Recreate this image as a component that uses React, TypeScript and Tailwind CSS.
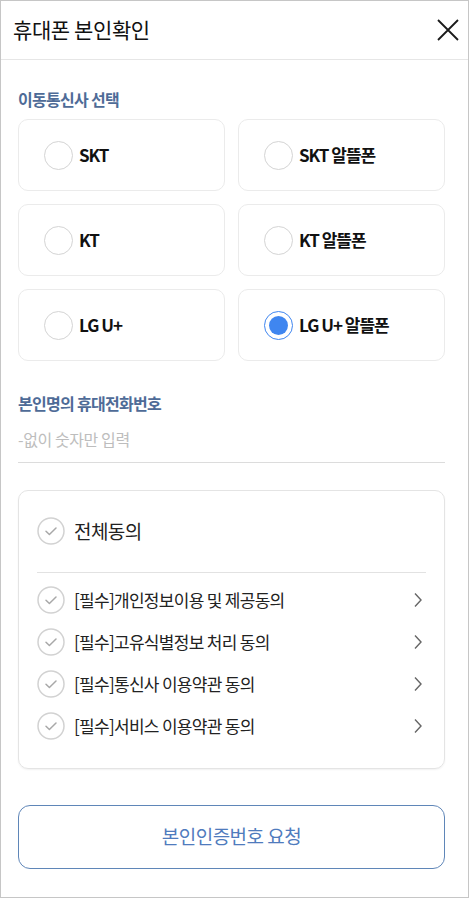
import { useState } from 'react';

const carriers = ['SKT', 'SKT 알뜰폰', 'KT', 'KT 알뜰폰', 'LG U+', 'LG U+ 알뜰폰'];

const terms = [
  '[필수]개인정보이용 및 제공동의',
  '[필수]고유식별정보 처리 동의',
  '[필수]통신사 이용약관 동의',
  '[필수]서비스 이용약관 동의',
];

function CheckCircle() {
  return (
    <svg className="w-[28px] h-[28px] shrink-0" viewBox="0 0 28 28" fill="none">
      <circle cx="14" cy="14" r="13" stroke="#d2d2d2" strokeWidth="1.5" />
      <path d="M9 14.2l3.4 3.3L19 11" stroke="#a8a8a8" strokeWidth="1.5" strokeLinecap="round" strokeLinejoin="round" />
    </svg>
  );
}

export default function App() {
  const [carrier, setCarrier] = useState('LG U+ 알뜰폰');

  return (
    <div
      className="w-[469px] h-[898px] border border-[#c6c6c6] bg-white flex flex-col"
      style={{ fontFamily: '"Noto Sans CJK KR", "Noto Sans", sans-serif' }}
    >
      {/* Header */}
      <div className="h-[59px] shrink-0 flex items-center justify-between pl-[12px] pr-[7px] border-b border-[#e6e6e6]">
        <h1 className="text-[21px] text-[#111] tracking-[-0.4px]">휴대폰 본인확인</h1>
        <button className="w-[26px] h-[26px] flex items-center justify-center">
          <svg className="w-[24px] h-[24px]" viewBox="0 0 24 24" fill="none" stroke="#1a1a1a" strokeWidth="1.8">
            <path d="M2 2l20 20M22 2L2 22" />
          </svg>
        </button>
      </div>

      <div className="pl-[17px] pr-[23px] flex flex-col">
        <p className="mt-[27px] text-[16px] font-bold text-[#4e6b97] tracking-[-0.7px]">이동통신사 선택</p>

        <div className="mt-[8px] grid grid-cols-2 gap-x-[13px] gap-y-[13px]">
          {carriers.map((c) => {
            const on = carrier === c;
            return (
              <button
                key={c}
                onClick={() => setCarrier(c)}
                className="h-[72px] rounded-[10px] border border-[#ebebeb] flex items-center pl-[25px] gap-[6px] text-left"
              >
                {on ? (
                  <span className="w-[29px] h-[29px] rounded-full border-[1.5px] border-[#3f86f0] flex items-center justify-center">
                    <span className="w-[19px] h-[19px] rounded-full bg-[#3f86f0]" />
                  </span>
                ) : (
                  <span className="w-[29px] h-[29px] rounded-full border-[1.5px] border-[#d4d4d4]" />
                )}
                <span className="text-[17px] font-bold text-[#111] tracking-[-1px]">{c}</span>
              </button>
            );
          })}
        </div>

        <p className="mt-[30px] text-[16px] font-bold text-[#4e6b97] tracking-[-0.7px]">본인명의 휴대전화번호</p>
        <input
          className="mt-[10px] h-[38px] pb-[10px] text-[16px] border-b border-[#dcdcdc] outline-none placeholder:text-[#bdbdbd] tracking-[-0.4px]"
          placeholder="-없이 숫자만 입력"
        />

        {/* Agreements */}
        <div className="mt-[27px] rounded-[10px] border border-[#e4e4e4] shadow-[0_1px_2px_rgba(0,0,0,0.06)] px-[18px] pt-[26px] pb-[28px]">
          <div className="flex items-center gap-[9px]">
            <CheckCircle />
            <span className="text-[19px] text-[#222] tracking-[-0.6px]">전체동의</span>
          </div>
          <div className="mt-[26px] mb-[13px] h-px bg-[#e2e2e2]" />
          <div className="flex flex-col gap-[14px]">
            {terms.map((t) => (
              <div key={t} className="h-[28px] flex items-center gap-[9px]">
                <CheckCircle />
                <span className="flex-1 text-[17px] text-[#222] tracking-[-0.7px]">{t}</span>
                <svg className="w-[14px] h-[16px] mr-[1px]" viewBox="0 0 14 16" fill="none" stroke="#666" strokeWidth="1.4">
                  <path d="M4 1.5l6 6.5-6 6.5" />
                </svg>
              </div>
            ))}
          </div>
        </div>

        <button className="mt-[36px] h-[64px] rounded-[12px] border border-[#5f86b8] text-[19px] text-[#4f7bbd] tracking-[-0.5px]">
          본인인증번호 요청
        </button>
      </div>
    </div>
  );
}
